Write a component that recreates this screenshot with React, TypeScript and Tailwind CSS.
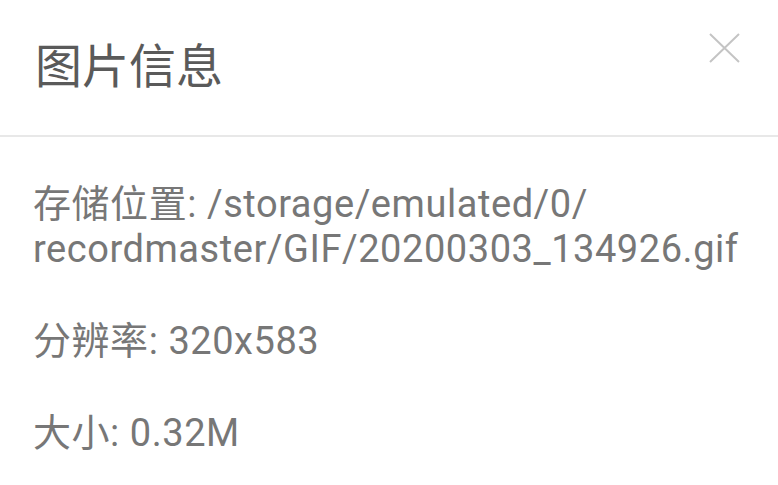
export default function App() {
  return (
    <div className="w-[778px] h-[485px] bg-white overflow-hidden font-['Roboto','Noto_Sans_CJK_SC',sans-serif]">
      {/* Header */}
      <div className="flex items-start justify-between h-[137px] pl-[35px] pr-[38px] pt-[33px] border-b-2 border-[#e8e8e8]">
        <h1 className="mt-[6px] text-[47px] leading-[56px] text-[#5a5a5a] font-normal">图片信息</h1>
        <button className="w-[31px] h-[30px]" aria-label="关闭">
          <svg width="31" height="30" viewBox="0 0 31 30" fill="none">
            <path d="M1 1L30 29M30 1L1 29" stroke="#c4c4c4" strokeWidth="2" />
          </svg>
        </button>
      </div>

      {/* Details */}
      <div className="flex flex-col gap-[47px] pt-[45px] pl-[33px] text-[38px] leading-[45px] tracking-[0.55px] text-[#777777]">
        <p>
          存储位置: /storage/emulated/0/
          <br />
          recordmaster/GIF/20200303_134926.gif
        </p>
        <p>分辨率: 320x583</p>
        <p>大小: 0.32M</p>
      </div>
    </div>
  );
}
